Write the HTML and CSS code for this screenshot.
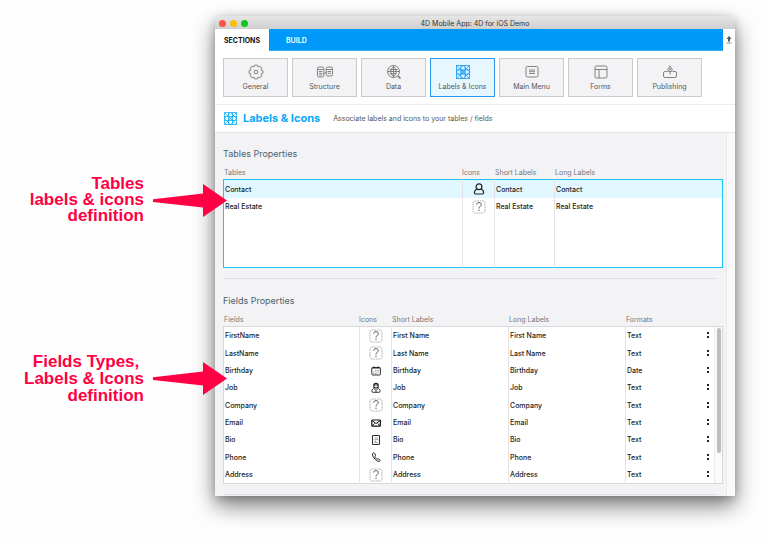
FILE: index.html
```html
<!DOCTYPE html>
<html lang="en">
<head>
<meta charset="utf-8">
<title>4D Mobile App: 4D for iOS Demo</title>
<link rel="stylesheet" href="styles.css">
</head>
<body>
<svg class="sprites" aria-hidden="true">
  <symbol id="unknown" viewBox="0 0 14 14">
    <rect x="1" y="1" width="12" height="12" rx="2" fill="#fff" stroke="#999" stroke-width=".8" stroke-dasharray="1.6 .8"/>
    <path d="M4.700 4.600C4.700 3.300 5.700 2.600 7 2.600s2.300.8 2.300 2C9.300 6.300 7 6.500 7 8.500M7 9.700v1.300" fill="none" stroke="#555" stroke-width="1"/>
  </symbol>
  <symbol id="person" viewBox="0 0 14 14">
    <circle cx="7" cy="4.800" r="2.900" fill="none" stroke="#222" stroke-width="1.200"/>
    <path d="M4.800 7.300C3 7.900 2.400 9.200 2.400 10.800Q2.400 12 3.600 12h6.800Q11.600 12 11.600 10.800C11.600 9.200 11 7.900 9.200 7.300" fill="none" stroke="#222" stroke-width="1.200"/>
  </symbol>
  <symbol id="calendar" viewBox="0 0 14 14">
    <rect x="2.800" y="3.500" width="8.600" height="7.500" rx="1" fill="none" stroke="#333"/>
    <path d="M2.800 4h8.600M5 2.500v1.500M9.200 2.500v1.500" stroke="#222" stroke-width="1.200"/>
    <path d="M6 6.500h4.500M4.200 8h6M4.200 9.500h4.500" stroke="#888" stroke-width=".8" stroke-dasharray="1 .6"/>
  </symbol>
  <symbol id="worker" viewBox="0 0 14 14">
    <circle cx="7" cy="4.700" r="2.300" fill="none" stroke="#222" stroke-width="1.100"/>
    <path d="M5.200 7.100C3.700 7.700 2.900 8.700 2.900 10.200q0 1.100 1 1.100h6.200q1 0 1-1.100c0-1.500-.8-2.500-2.300-3.100M5.200 7.700L7 9.500l1.800-1.800M7 9.500v1.800M5 4h4" fill="none" stroke="#222" stroke-width=".9"/>
  </symbol>
  <symbol id="mail" viewBox="0 0 14 14">
    <rect x="2.800" y="4" width="8.600" height="6.200" rx=".8" fill="none" stroke="#111" stroke-width="1.200"/>
    <path d="M3 4.500l4.100 3 4.100-3M3.200 9.700l2.400-2.300M11 9.700L8.600 7.400" fill="none" stroke="#111"/>
  </symbol>
  <symbol id="note" viewBox="0 0 14 14">
    <rect x="3.500" y="2.500" width="7" height="9" rx=".6" fill="none" stroke="#333" stroke-width="1.100"/>
    <path d="M5.500 5h1.200M7.500 5H9M5.500 6.700H9M5.500 8.300h1.500M5.500 9.700H9" stroke="#777" stroke-width=".8"/>
  </symbol>
  <symbol id="phone" viewBox="0 0 14 14">
    <path d="M4.200 3c-1.300.8-.9 2.600.8 4.900s3.800 3.900 5.500 3.400c.8-.3.900-1 .3-1.500l-1.300-.9c-.6-.3-1 .2-1.400.3C7 8.700 5.800 7.200 6 6.500c.2-.4.700-.6.500-1.300L5.700 3.500C5.300 2.700 4.600 2.700 4.200 3z" fill="none" stroke="#222"/>
  </symbol>
  <symbol id="mosaic" viewBox="0 0 14 14">
    <path d="M.5.500h13v13H.5zM4.800.5v13M9.200.5v13M.5 4.800h13M.5 9.200h13" fill="none" stroke="currentColor" stroke-width=".9"/>
    <path d="M.5.500l13 13M13.500.5l-13 13M7 .5L.5 7 7 13.500 13.500 7z" fill="none" stroke="currentColor" stroke-width=".8"/>
    <circle cx="7" cy="7" r="1.700" fill="none" stroke="currentColor" stroke-width=".7"/>
  </symbol>
  <symbol id="arrow" viewBox="0 0 74 33">
    <path d="M0 15.200L50 9.500V0L74 16.500 50 33v-9.500L0 18z" fill="#ff0044"/>
  </symbol>
</svg>

<div class="page">
  <aside class="notes">
    <div class="note note-tables">
      <p>Tables<br>labels &amp; icons<br>definition</p>
      <svg class="pointer"><use href="#arrow"/></svg>
    </div>
    <div class="note note-fields">
      <p>Fields Types,&nbsp;<br>Labels &amp; Icons<br>definition</p>
      <svg class="pointer"><use href="#arrow"/></svg>
    </div>
  </aside>

  <main class="window">
    <header class="titlebar">
      <div class="lights"><i class="close"></i><i class="minimize"></i><i class="zoom"></i></div>
      <span>4D Mobile App: 4D for iOS Demo</span>
    </header>
    <nav class="tabs">
      <button class="tab current">SECTIONS</button>
      <div class="tab-fill"><button class="tab">BUILD</button></div>
      <button class="upload" aria-label="Upload"><svg viewBox="0 0 6 8"><path d="M3 0L5.500 3H4v2.500H2V3H.5z" fill="#555"/><path d="M.5 7h5" stroke="#888"/></svg></button>
    </nav>
    <nav class="toolbar">
      <button class="tool"><svg viewBox="0 0 16 16" fill="none" stroke="#777" stroke-width=".9"><path d="M6.500 1.300Q8 .6 9.500 1.300L10 3l1.700-.8q1.600.6 2.100 2.100L13 6l1.700.5q.7 1.500 0 3L13 10l.8 1.700q-.6 1.600-2.100 2.100L10 13l-.5 1.700q-1.500.7-3 0L6 13l-1.700.8q-1.600-.6-2.100-2.100L3 10l-1.700-.5q-.7-1.500 0-3L3 6l-.8-1.700q.6-1.600 2.100-2.100L6 3z" stroke-linejoin="round"/><circle cx="8" cy="8" r="1.800"/></svg>General</button>
      <button class="tool"><svg viewBox="0 0 16 16" fill="none" stroke="#777" stroke-width=".9"><rect x=".5" y="3" width="6.300" height="10" rx="1.500"/><rect x="9.200" y="3" width="6.300" height="9" rx="1.500"/><path d="M.5 5.500h6.300M9.200 5.500h6.300M2 7.500h3.300M2 9.300h3.300M2 11h3.300M10.700 7.500H14M10.700 9.300H14M6.800 10l2.400-2"/></svg>Structure</button>
      <button class="tool"><svg viewBox="0 0 16 16" fill="none" stroke="#777" stroke-width=".9"><circle cx="7.500" cy="7.500" r="6"/><path d="M3.500 5.500h8M1.500 7.500h12M3.500 9.700h7M7.500 1.500v12M7.500 2.500C4 5 4 10 7.500 12.500M7.500 2.500C11 5 11 10 7.500 12.500"/><path d="M12 12l2.500 2.500" stroke-width="1.700"/></svg>Data</button>
      <button class="tool active"><svg class="mosaic"><use href="#mosaic"/></svg>Labels &amp; Icons</button>
      <button class="tool"><svg viewBox="0 0 16 16" fill="none" stroke="#777" stroke-width=".9"><rect x="2" y="2.500" width="12" height="10.500" rx="1.300"/><path d="M5 6h6M5 7.700h6M5 9.500h6"/></svg>Main Menu</button>
      <button class="tool"><svg viewBox="0 0 16 16" fill="none" stroke="#777" stroke-width=".9"><rect x="2" y="2" width="12" height="12" rx="1.300"/><path d="M2 5.500h12M6 5.500V14"/></svg>Forms</button>
      <button class="tool"><svg viewBox="0 0 16 16" fill="none" stroke="#777" stroke-width=".9"><path d="M5.500 7.500H3Q1.500 7.500 1.500 9v3Q1.500 13.500 3 13.500h10q1.500 0 1.500-1.500V9q0-1.500-1.500-1.500h-2.500"/><path d="M8 10.500V7M6.500 7.500L5.800 5.300 8 1.800l2.200 3.500-.7 2.200z"/><circle cx="8" cy="5.300" r=".7"/></svg>Publishing</button>
    </nav>
    <div class="heading">
      <svg class="mosaic"><use href="#mosaic"/></svg>
      <h1>Labels &amp; Icons</h1>
      <p>Associate labels and icons to your tables / fields</p>
    </div>

    <div class="body">
      <div class="content">
        <section class="panel">
          <h2>Tables Properties</h2>
          <table class="grid tables">
            <colgroup><col class="name"><col class="icon"><col class="short"><col></colgroup>
            <thead><tr><th>Tables</th><th>Icons</th><th>Short Labels</th><th>Long Labels</th></tr></thead>
            <tbody>
              <tr class="selected"><td>Contact</td><td><svg><use href="#person"/></svg></td><td>Contact</td><td>Contact</td></tr>
              <tr><td>Real Estate</td><td><svg><use href="#unknown"/></svg></td><td>Real Estate</td><td>Real Estate</td></tr>
              <tr class="filler"><td></td><td></td><td></td><td></td></tr>
            </tbody>
          </table>
        </section>
        <hr>
        <section class="panel">
          <h2>Fields Properties</h2>
          <div class="scroller">
            <table class="grid fields">
              <colgroup><col class="name"><col class="icon"><col class="label"><col class="label"><col></colgroup>
              <thead><tr><th>Fields</th><th>Icons</th><th>Short Labels</th><th>Long Labels</th><th>Formats</th></tr></thead>
              <tbody>
                <tr><td>FirstName</td><td><svg><use href="#unknown"/></svg></td><td>First Name</td><td>First Name</td><td><select aria-label="FirstName format"><option>Text</option></select></td></tr>
                <tr><td>LastName</td><td><svg><use href="#unknown"/></svg></td><td>Last Name</td><td>Last Name</td><td><select aria-label="LastName format"><option>Text</option></select></td></tr>
                <tr><td>Birthday</td><td><svg><use href="#calendar"/></svg></td><td>Birthday</td><td>Birthday</td><td><select aria-label="Birthday format"><option>Date</option></select></td></tr>
                <tr><td>Job</td><td><svg><use href="#worker"/></svg></td><td>Job</td><td>Job</td><td><select aria-label="Job format"><option>Text</option></select></td></tr>
                <tr><td>Company</td><td><svg><use href="#unknown"/></svg></td><td>Company</td><td>Company</td><td><select aria-label="Company format"><option>Text</option></select></td></tr>
                <tr><td>Email</td><td><svg><use href="#mail"/></svg></td><td>Email</td><td>Email</td><td><select aria-label="Email format"><option>Text</option></select></td></tr>
                <tr><td>Bio</td><td><svg><use href="#note"/></svg></td><td>Bio</td><td>Bio</td><td><select aria-label="Bio format"><option>Text</option></select></td></tr>
                <tr><td>Phone</td><td><svg><use href="#phone"/></svg></td><td>Phone</td><td>Phone</td><td><select aria-label="Phone format"><option>Text</option></select></td></tr>
                <tr><td>Address</td><td><svg><use href="#unknown"/></svg></td><td>Address</td><td>Address</td><td><select aria-label="Address format"><option>Text</option></select></td></tr>
              </tbody>
            </table>
            <div class="scrollbar"><div class="thumb"></div></div>
          </div>
        </section>
        <hr class="last">
      </div>
      <div class="gutter"></div>
    </div>
  </main>
</div>
</body>
</html>
```
FILE: styles.css
```css
* { box-sizing: border-box; }
body { margin: 0; background: #fefefe; font: 7px/13px Inter, sans-serif; color: #222; overflow: hidden; }
h1, h2, p { margin: 0; }
button { margin: 0; padding: 0; border: 0; background: none; font: inherit; color: inherit; }
svg { display: block; }
.sprites { position: absolute; width: 0; height: 0; }

.page { display: flex; align-items: flex-start; padding: 16px 33px 43px 0; }
.notes { flex: 0 0 215px; padding-top: 160px; position: relative; z-index: 1; }
.note { display: flex; align-items: center; justify-content: flex-end; gap: 9px; margin-right: -12px; color: #ff0044; font: bold 17px/16px "Liberation Sans", sans-serif; text-align: right; }
.note-fields { margin-top: 129px; line-height: 17px; }
.pointer { width: 74px; height: 33px; }

.window { flex: 1; min-width: 0; border-radius: 5px 5px 0 0; background: #fff; box-shadow: 0 10px 22px rgba(0, 0, 0, .5), 0 2px 10px rgba(0, 0, 0, .2); }
.titlebar { position: relative; height: 13px; border-radius: 5px 5px 0 0; background: linear-gradient(#e6e6e6, #cfcfcf); text-align: center; color: #333; }
.titlebar span { line-height: 15px; }
.lights { position: absolute; left: 4px; top: 4px; display: flex; gap: 4px; }
.lights i { width: 7px; height: 7px; border-radius: 50%; }
.close { background: #ff5245; }
.minimize { background: #fdbc05; }
.zoom { background: #0ac91c; }

.tabs { display: flex; height: 22px; font-weight: 600; }
.tab.current { width: 54px; color: #111; font-weight: 700; }
.tab-fill { flex: 1; display: flex; padding-left: 17px; background: #0098f9; color: #fff; box-shadow: inset 0 -1px #35b0ee; }
.upload { width: 12px; display: flex; align-items: center; justify-content: center; }
.upload svg { width: 6px; height: 8px; }

.toolbar { display: flex; gap: 4px; padding: 7px 8px; border-bottom: 1px solid #ececec; }
.tool { width: 65px; height: 39px; display: flex; flex-direction: column; align-items: center; padding-top: 5px; border: 1px solid #cacacc; background: #f3f3f5; color: #555; line-height: 12px; }
.tool svg { width: 16px; height: 16px; margin-bottom: 1px; }
.tool.active { border-color: #2d96ea; background: #e7f7ff; }
.tool.active svg { padding: 1px; color: #1fa0f4; }

.heading { display: flex; align-items: center; height: 28px; padding-left: 9px; border-bottom: 1px solid #e4e4e6; }
.heading svg { width: 13px; height: 13px; color: #12aef2; }
.heading h1 { margin: 0 13px 0 6px; font-size: 11px; color: #06aaf8; }
.heading p { color: #555; }

.body { display: flex; background: #f3f3f5; }
.content { flex: 1; min-width: 0; padding: 14px 3px 1px 8px; }
.gutter { width: 9px; background: #fafafa; border-left: 1px solid #eaeaec; }
h2 { margin-bottom: 5px; font-size: 9px; line-height: 14px; font-weight: 400; color: #4a626d; }
hr { margin: 10px 6px 15px 0; border: 0; height: 1px; background: #dfdfe1; }
hr.last { margin: 10px 6px 0 0; }

.grid { width: 100%; table-layout: fixed; border-collapse: separate; border-spacing: 0; }
.grid th { height: 13px; padding: 0 0 0 1px; text-align: left; font-weight: 400; color: #777; }
.grid th, .grid td { line-height: 13px; white-space: nowrap; }
.grid th:nth-child(2) { padding-left: 0; }
.grid td { height: 17px; padding: 0 0 0 1px; background: #fff; border-left: 1px solid #e4e4e6; font-weight: 500; }
.grid td svg { width: 14px; height: 14px; margin: 0 auto; }
.grid tr:first-child td { border-top: 1px solid #d8d8da; height: 18px; }
.grid tr:last-child td { border-bottom: 1px solid #d8d8da; height: 18px; }
.grid td:first-child { border-left-color: #d8d8da; }
.grid td:last-child { border-right: 1px solid #d8d8da; }
.tables .name { width: 239px; }
.tables .icon { width: 32px; }
.tables .short { width: 60px; }
.tables .selected td { background: #e0f7ff; }
.tables tr:first-child td { border-top-color: #18c5f3; height: 19px; }
.tables tr:last-child td { border-bottom-color: #18c5f3; }
.tables td:first-child { border-left-color: #18c5f3; }
.tables td:last-child { border-right-color: #18c5f3; }
.tables tr.filler:last-child td { height: 53px; }

.scroller { position: relative; }
.fields .name { width: 136px; }
.fields .icon { width: 32px; }
.fields .label { width: 117px; }
.fields tbody tr:nth-child(3n+2) td { height: 18px; }
.fields td:last-child { padding-right: 12px; }
select { display: block; width: 100%; height: 13px; padding: 0; border: 0; appearance: none; font: inherit; color: inherit; background: linear-gradient(#222, #222) right 1px top 3px / 2px 2px no-repeat, linear-gradient(#222, #222) right 1px top 7px / 2px 2px no-repeat; }
.scrollbar { position: absolute; right: 1px; top: 14px; bottom: 1px; width: 8px; padding: 1px 2px; border-left: 1px solid #eee; background: #fafafa; }
.thumb { width: 4px; height: 81%; border-radius: 2px; background: #bdbdbd; }
```
